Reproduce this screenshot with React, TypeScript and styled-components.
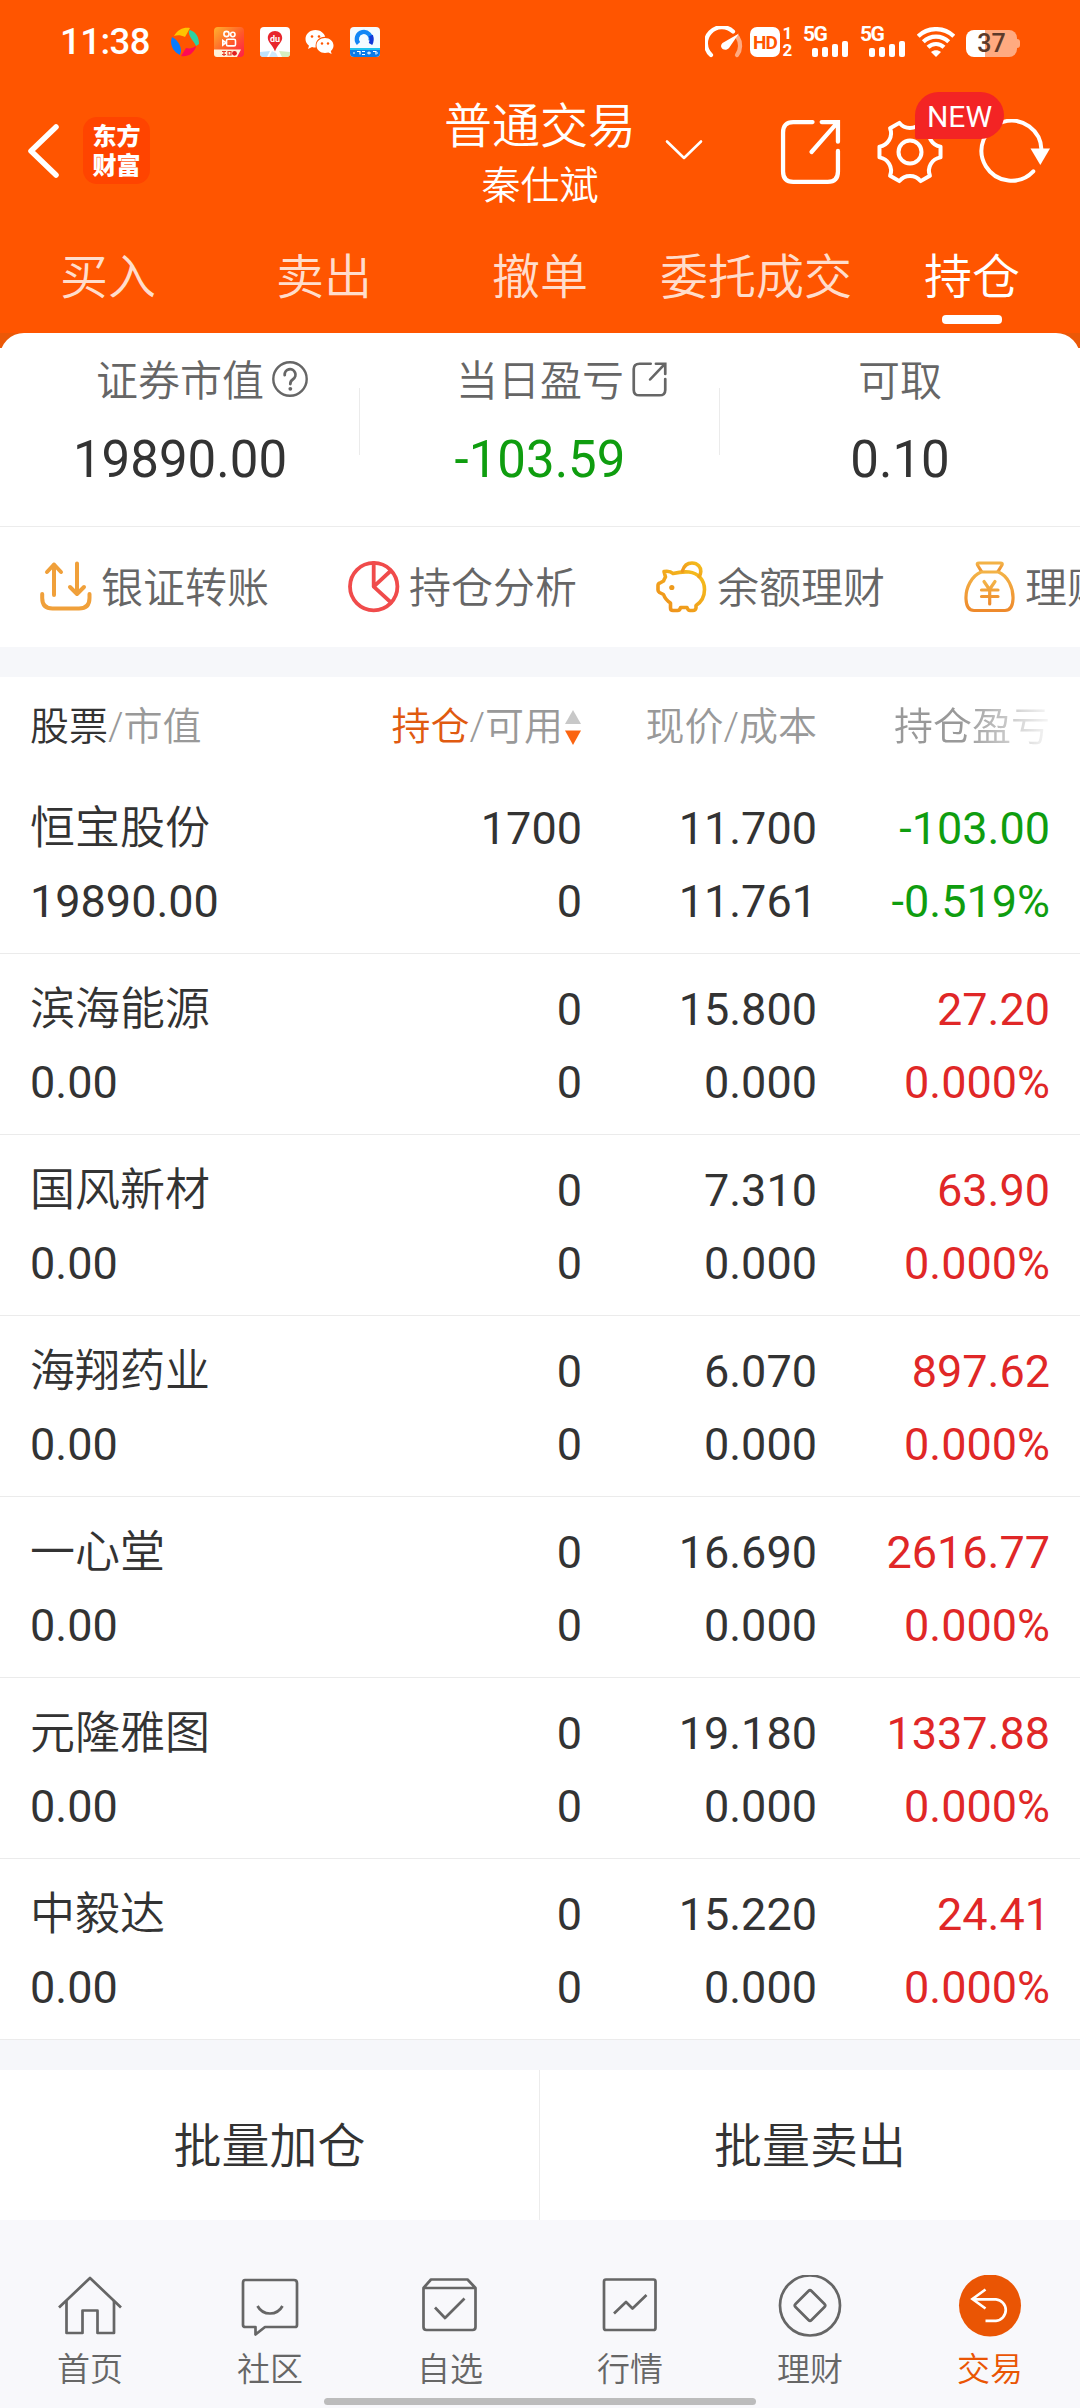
import React from 'react';
import styled, { createGlobalStyle } from 'styled-components';

const GlobalStyle = createGlobalStyle`
  * { box-sizing: border-box; }
  html, body { margin: 0; padding: 0; background: #f7f8fa; }
  body { font-family: Roboto, "Noto Sans CJK SC", sans-serif; color: #333; }
  svg { display: block; flex: none; }
`;

const Screen = styled.div`
  width: 1080px;
  height: 2408px;
  display: flex;
  flex-direction: column;
  overflow: hidden;
  background: #f7f8fa;
`;

/* ---------- status bar ---------- */

const StatusBar = styled.div`
  height: 84px;
  padding: 0 60px 0 61px;
  display: flex;
  align-items: center;
  justify-content: space-between;
  background: #ff5500;
  color: #fff;
`;

const StatusGroup = styled.div<{ $gap: number }>`
  display: flex;
  align-items: center;
  gap: ${(p) => p.$gap}px;
`;

const Clock = styled.span`
  width: 95px;
  margin-left: -1px;
  padding-right: 1px;
  font-size: 36.5px;
  line-height: 44px;
  font-weight: 500;
  letter-spacing: -0.5px;
  white-space: nowrap;
`;

const HdBadge = styled.span`
  width: 30px;
  height: 30px;
  margin-left: 7px;
  border-radius: 7px;
  background: #fff;
  color: #ff5500;
  font-size: 19px;
  font-weight: 700;
  line-height: 31px;
  text-align: center;
  letter-spacing: -1px;
`;

const SimNumbers = styled.span`
  width: 11px;
  display: flex;
  flex-direction: column;
  font-size: 17px;
  font-weight: 700;
  line-height: 17px;
  text-align: center;
  margin-right: 10px;
  margin-left: 2px;
`;

const Signal = styled.span`
  width: 46px;
  height: 30px;
  display: flex;
  flex-direction: column;
  margin-right: 11px;
`;

const SignalLabel = styled.span`
  font-size: 21px;
  font-weight: 700;
  line-height: 15px;
  letter-spacing: -1.5px;
`;

const SignalBars = styled.span`
  height: 16px;
  margin-top: -1px;
  padding-left: 9px;
  display: flex;
  align-items: flex-end;
  gap: 4px;
`;

const SignalBar = styled.i<{ $h: number }>`
  width: 6px;
  height: ${(p) => p.$h}px;
  border-radius: 2px;
  background: #fff;
`;

const Battery = styled.span`
  width: 51px;
  height: 27px;
  margin: 3px 0 0 11px;
  border-radius: 8px;
  background: linear-gradient(90deg, #fff 0 19px, #ffaa80 19px);
  color: #5c3a2a;
  font-size: 25px;
  font-weight: 500;
  line-height: 28px;
  text-align: center;
`;

const BatteryTip = styled.i`
  width: 3px;
  height: 9px;
  margin-top: 3px;
  border-radius: 0 3px 3px 0;
  background: #ffaa80;
`;

/* ---------- title bar ---------- */

const TitleBar = styled.div`
  height: 132px;
  padding-left: 27px;
  display: flex;
  align-items: flex-start;
  background: #ff5500;
  color: #fff;
`;

const TitleLeft = styled.div`
  width: 393px;
  padding-top: 33px;
  display: flex;
  align-items: center;
  gap: 24px;
`;

const BrandLogo = styled.div`
  width: 67px;
  height: 67px;
  padding-top: 2px;
  border-radius: 14px;
  background: #ff4400;
  display: flex;
  flex-direction: column;
  align-items: center;
  justify-content: center;
  font-size: 24px;
  font-weight: 900;
  line-height: 29px;
`;

const TitleBlock = styled.div`
  width: 240px;
  padding-top: 13px;
  display: flex;
  flex-direction: column;
  align-items: center;
`;

const Title = styled.div`
  font-size: 48px;
  line-height: 60px;
  font-weight: 350;
`;

const Account = styled.div`
  font-size: 39px;
  line-height: 59px;
  font-weight: 350;
`;

const TitleChevron = styled.div`
  width: 120px;
  padding: 55px 0 0 5px;
`;

const TitleActions = styled.div`
  display: flex;
  padding-top: 35px;
  gap: 36px;
`;

const ActionWithBadge = styled.div`
  position: relative;
  z-index: 1;
`;

const NewBadge = styled.span`
  position: absolute;
  left: 38px;
  top: -27px;
  width: 89px;
  height: 47px;
  border-radius: 24px 24px 24px 2px;
  background: #f32424;
  font-size: 30px;
  line-height: 49px;
  text-align: center;
`;

/* ---------- trade tabs ---------- */

const TradeTabs = styled.div`
  height: 117px;
  display: grid;
  grid-template-columns: repeat(5, 1fr);
  background: #ff5500;
`;

const TradeTab = styled.div<{ $active?: boolean }>`
  padding-top: 32px;
  display: flex;
  flex-direction: column;
  align-items: center;
  gap: 7px;
  font-size: 48px;
  line-height: 60px;
  font-weight: 350;
  color: ${(p) => (p.$active ? '#fff' : '#ffddcc')};
`;

const TabUnderline = styled.i`
  width: 60px;
  height: 9px;
  border-radius: 4px;
  background: #fff;
`;

/* ---------- account summary ---------- */

const SummaryShell = styled.div`
  height: 194px;
  background: linear-gradient(180deg, #eb5807 0 15px, #fff 15px);
`;

const Summary = styled.div`
  height: 194px;
  border-radius: 24px 24px 0 0;
  border-bottom: 1px solid #ececec;
  background: #fff;
  display: grid;
  grid-template-columns: repeat(3, 1fr);
`;

const SummaryCell = styled.div`
  display: flex;
  flex-direction: column;
  align-items: center;
  padding-top: 19px;
  background: linear-gradient(#ebebeb, #ebebeb) no-repeat right 55px / 1px 67px;
  &:last-child { background: none; }
`;

const SummaryLabel = styled.div`
  display: flex;
  align-items: center;
  font-size: 42px;
  line-height: 60px;
  font-weight: 350;
  color: #666;
`;

const LabelIcon = styled.span`
  width: 36px;
  margin: -6px -44px 0 8px;
`;

const SummaryValue = styled.div<{ $color?: string }>`
  font-size: 51px;
  line-height: 60px;
  margin-top: 18px;
  color: ${(p) => p.$color || '#333'};
`;

/* ---------- shortcuts ---------- */

const Shortcuts = styled.div`
  height: 120px;
  padding: 0 0 0 40px;
  display: flex;
  background: #fff;
  overflow: hidden;
`;

const Shortcut = styled.div`
  flex: 0 0 308px;
  display: flex;
  align-items: center;
  gap: 9px;
`;

const ShortcutLabel = styled.span`
  padding-top: 4px;
  font-size: 42px;
  line-height: 60px;
  font-weight: 350;
  color: #666;
  white-space: nowrap;
`;

const Gap = styled.div`
  height: 30px;
  background: #f6f7fa;
`;

/* ---------- positions table ---------- */

const columns = '320px 232px 235px 233px';

const TableHead = styled.div`
  height: 96px;
  padding: 20px 30px 0;
  display: grid;
  grid-template-columns: ${columns};
  align-items: start;
  background: #fff;
  font-size: 39px;
  line-height: 61px;
  font-weight: 350;
  color: #999;
`;

const HeadCell = styled.div<{ $right?: boolean; $fade?: boolean }>`
  display: flex;
  justify-content: ${(p) => (p.$right ? 'flex-end' : 'flex-start')};
  align-items: center;
  white-space: nowrap;
  ${(p) => p.$fade && 'mask-image: linear-gradient(90deg, #000 145px, rgba(0,0,0,.08) 233px);'}
`;

const HeadStrong = styled.span<{ $color: string }>`
  color: ${(p) => p.$color};
`;

const SortArrows = styled.span`
  width: 16px;
  margin: 0 1px 0 2px;
`;

const Row = styled.div`
  height: 181px;
  padding: 19px 30px 0;
  border-bottom: 1px solid #ebebeb;
  display: grid;
  grid-template-columns: ${columns};
  align-content: start;
  background: #fff;
  font-size: 45px;
  line-height: 73px;
`;

const Cell = styled.div<{ $color?: string }>`
  text-align: right;
  color: ${(p) => p.$color || '#333'};
`;

const LeftCell = styled(Cell)`
  text-align: left;
`;

const NameCell = styled(LeftCell)`
  font-weight: 350;
`;

/* ---------- batch actions ---------- */

const BatchBar = styled.div`
  height: 150px;
  display: grid;
  grid-template-columns: 1fr 1fr;
  background: #fff;
`;

const BatchButton = styled.button`
  border: 0;
  border-right: 1px solid #ececec;
  padding: 4px 0 0;
  background: none;
  font: inherit;
  font-size: 48px;
  font-weight: 350;
  line-height: 60px;
  color: #333;
  &:last-child { border-right: 0; }
`;

/* ---------- bottom navigation ---------- */

const BottomNav = styled.nav`
  height: 188px;
  display: flex;
  flex-direction: column;
  align-items: center;
  background: #f8f8fb;
`;

const NavItems = styled.div`
  width: 100%;
  height: 178px;
  padding-top: 55px;
  display: grid;
  grid-template-columns: repeat(6, 1fr);
`;

const NavItem = styled.div<{ $active?: boolean }>`
  display: flex;
  flex-direction: column;
  align-items: center;
  gap: 11px;
  font-size: 33px;
  line-height: 40px;
  font-weight: 350;
  color: ${(p) => (p.$active ? '#ea5504' : '#666')};
`;

const HomeIndicator = styled.i`
  width: 432px;
  height: 7px;
  border-radius: 4px;
  background: #bcbcbc;
`;

/* ---------- icons ---------- */

const stroke = { fill: 'none', stroke: 'currentColor', strokeLinejoin: 'round', strokeLinecap: 'round' } as const;

const PinwheelIcon = () => (
  <svg width="28" height="30" viewBox="0 0 28 30">
    <path d="M3 9C7 2 13 0 19 1L14 10C10 8 6 8 3 9Z" fill="#ffc400" />
    <path d="M19 3C25 5 28 10 28 17L25 19C22 13 17 9 18 4Z" fill="#2fd2a0" />
    <path d="M25 20C22 27 17 30 10 29L15 21C19 22 22 21 25 19Z" fill="#ff0a54" />
    <path d="M1 10C5 12 10 17 10 24L9 28C3 25 0 20 0 14Z" fill="#0a7bff" />
  </svg>
);

const VideoAppIcon = () => (
  <svg width="30" height="30" viewBox="0 0 30 30">
    <defs>
      <linearGradient id="video" x1="0" y1="0" x2="1" y2="1">
        <stop offset="0" stopColor="#ffb22e" />
        <stop offset=".55" stopColor="#ff5a2a" />
        <stop offset="1" stopColor="#ff1c4a" />
      </linearGradient>
    </defs>
    <rect width="30" height="30" rx="4" fill="url(#video)" />
    <g fill="none" stroke="#fff" strokeWidth="1.600">
      <circle cx="12.500" cy="7" r="2.600" />
      <circle cx="18.800" cy="7.500" r="2.200" />
      <rect x="12.500" y="12.300" width="9" height="6.600" rx="1.500" />
      <path d="M12 15.600 8.800 13.500v4.600Z" />
    </g>
    <path d="M0 22.500H27L23 30H3Q0 30 0 27Z" fill="#fff0d8" />
    <path d="M8 24.500h4M8 27.500h4M10 24v5M14 24.500h3v3.500h-3Z" stroke="#e8402a" strokeWidth="1.200" fill="none" />
    <circle cx="20.500" cy="26.300" r="2.400" fill="#e01f1f" />
  </svg>
);

const MapAppIcon = () => (
  <svg width="30" height="30" viewBox="0 0 30 30">
    <rect width="30" height="30" rx="4" fill="#fff" />
    <path d="M0 25 10 24 7 30H3Q0 30 0 27Z" fill="#bfe3fb" />
    <path d="M12 24 16 26 18 30H9Z" fill="#cfe9fb" />
    <path d="M19 24 30 25V27Q30 30 27 30H22Z" fill="#d6efc0" />
    <path d="M15 4c4.200 0 7.200 3 7.200 7 0 4.500-5 7-7.200 13.500C12.800 18 7.800 15.500 7.800 11c0-4 3-7 7.200-7Z" fill="#e8262d" />
    <text x="15" y="14.500" fontSize="9" fontWeight="700" fill="#fff" textAnchor="middle">du</text>
  </svg>
);

const ChatAppIcon = () => (
  <svg width="29" height="30" viewBox="0 0 29 30">
    <path d="M10.500 3C4.700 3 .5 7 .5 12c0 2.800 1.300 5 3.500 6.700L3 22l4-2c1.200.4 2.400.5 3.700.5C10 14 14 9.700 20.200 9.800 19 5.800 15.200 3 10.500 3Z" fill="#fff" />
    <path d="M20 11c4.800 0 8.500 3.300 8.500 7.500 0 2.300-1 4.200-2.700 5.500l.8 3-3.200-1.500c-1 .3-2.200.5-3.400.5-4.800 0-8.500-3.300-8.500-7.500S15.200 11 20 11Z" fill="#fff" />
    <g fill="#ff5500">
      <circle cx="7" cy="9.500" r="1.300" /><circle cx="14" cy="9.500" r="1.300" />
      <circle cx="17" cy="16.500" r="1.200" /><circle cx="23" cy="16.500" r="1.200" />
    </g>
  </svg>
);

const BrowserAppIcon = () => (
  <svg width="30" height="30" viewBox="0 0 30 30">
    <rect width="30" height="30" rx="4" fill="#f4fbff" />
    <path d="M0 21H30V26Q30 30 26 30H4Q0 30 0 26Z" fill="#0c7bea" />
    <path d="M0 21H30V23H0Z" fill="#1fc3ee" />
    <path d="M8.500 16.500A7 7 0 1 1 20.500 14" fill="none" stroke="#1286f5" strokeWidth="4.300" />
    <path d="M21 8.500C22.200 12 21.700 15 20.500 17" fill="none" stroke="#1238d8" strokeWidth="4" />
    <path d="M3 26h2M7 24.500h3v3M12 24.500h3M12 27.500h3M17 26h4M19 24.500v3M23 24.500h3v3M28 26h-1" stroke="#fff" strokeWidth="1.200" fill="none" />
  </svg>
);

const GaugeIcon = () => (
  <svg width="38" height="32" viewBox="0 0 38 32">
    <path d="M6 29A15.700 15.700 0 0 1 28 5.500" fill="none" stroke="#fff" strokeWidth="4.200" strokeLinecap="round" />
    <path d="M32.500 11A15.700 15.700 0 0 1 32 29" fill="none" stroke="#ffaa80" strokeWidth="4.200" strokeLinecap="round" />
    <path d="M34 7.500 24 22C20 26.500 13 21.500 17.500 17Z" fill="#fff" />
  </svg>
);

const WifiIcon = () => (
  <svg width="38" height="30" viewBox="0 0 38 30">
    <g fill="none" stroke="#fff" strokeWidth="4.200">
      <path d="M1.200 9.200C11 -.3 27 -.3 36.800 9.200" />
      <path d="M6.300 14.800C13.500 8 24.500 8 31.700 14.800" />
      <path d="M11 20.200C15.500 15.900 22.500 15.900 27 20.200" />
    </g>
    <path d="M14 25C17 22.500 21 22.500 24 25L19 30Z" fill="#fff" />
  </svg>
);

const BackIcon = () => (
  <svg width="32" height="56" viewBox="0 0 32 56">
    <path d="M29 4 4 28 29 52" {...stroke} strokeWidth="5.500" />
  </svg>
);

const ChevronDown = () => (
  <svg width="38" height="22" viewBox="0 0 38 22">
    <path d="M2 2.500 19 19 36 2.500" {...stroke} strokeWidth="2.600" />
  </svg>
);

const ExportIcon = ({ w, h, weight = 4.2 }: { w: number; h: number; weight?: number }) => (
  <svg width={w} height={h} viewBox="0 0 60 64" preserveAspectRatio="none">
    <path d="M32 3H13Q3 3 3 13V51Q3 61 13 61H47Q57 61 57 51V31" {...stroke} strokeWidth={weight} />
    <path d="M31 32 56 4M41 3H57V22" {...stroke} strokeLinejoin="miter" strokeWidth={weight} />
  </svg>
);

const gearOutline = () => {
  const point = (deg: number) => {
    const a = (deg * Math.PI) / 180;
    return `${(33 + 31 * Math.cos(a)).toFixed(2)} ${(33 + 31 * Math.sin(a)).toFixed(2)}`;
  };
  let d = `M${point(-10)}`;
  for (let tooth = 0; tooth < 6; tooth += 1) {
    const a = tooth * 60;
    d += `L${point(a + 10)}A13.500 13.500 0 0 0 ${point(a + 50)}`;
  }
  return `${d}Z`;
};

const GearIcon = () => (
  <svg width="66" height="66" viewBox="0 0 66 66">
    <path d={gearOutline()} {...stroke} strokeWidth="4" />
    <circle cx="33" cy="33" r="11.500" {...stroke} strokeWidth="4" />
  </svg>
);

const RefreshIcon = () => (
  <svg width="72" height="66" viewBox="0 0 72 66">
    <path d="M54.300 52.300A30 30 0 1 1 62.500 31" {...stroke} strokeWidth="4" />
    <path d="M51.500 29.500H71L61.300 46Z" fill="currentColor" />
  </svg>
);

const HelpIcon = () => (
  <svg width="36" height="36" viewBox="0 0 36 36">
    <circle cx="18" cy="18" r="16.700" {...stroke} strokeWidth="2.400" />
    <path d="M12.700 14.200A5.400 5.400 0 1 1 21 18.200C19 19.500 18.300 20.300 18.300 23" {...stroke} strokeWidth="2.800" />
    <circle cx="18.300" cy="27.800" r="1.900" fill="currentColor" />
  </svg>
);

const TransferIcon = () => (
  <svg width="52" height="52" viewBox="0 0 52 52">
    <g {...stroke} stroke="#f0a03a" strokeWidth="4">
      <path d="M14 34V3.500M7 11 14 3.500 21 11" />
      <path d="M37 2.500V32.500M30 26 37 33 44 26" />
      <path d="M2.200 33V37Q2.200 47.500 12.500 47.500H39Q49.500 47.500 49.500 37V33" />
    </g>
  </svg>
);

const PieIcon = () => (
  <svg width="52" height="52" viewBox="0 0 52 52">
    <g {...stroke} stroke="#f04b4b" strokeWidth="3.800">
      <circle cx="25.700" cy="25.600" r="23.700" />
      <path d="M25.700 2V25.600L43 41.500M25.700 25.600 42.500 10" />
    </g>
  </svg>
);

const PiggyIcon = () => (
  <svg width="52" height="52" viewBox="0 0 52 52">
    <defs>
      <linearGradient id="piggy" x1="1" y1="0" x2="0" y2="1">
        <stop offset="0" stopColor="#f5c01c" />
        <stop offset="1" stopColor="#ee8d1c" />
      </linearGradient>
    </defs>
    <g fill="none" stroke="url(#piggy)" strokeWidth="3.600" strokeLinejoin="round" strokeLinecap="round">
      <path d="M8 10.500Q14 9.500 17 12.500Q25 10.500 33 11C42 12 48.500 19 48.500 28.500Q48.500 39 40 44.500V47Q39.500 49.500 37 49.500H34Q32 49.500 31 46.500H24.500Q24 49.500 21.500 49.500H17Q14.500 49.500 14.500 47V42Q9.500 39 7.500 33.500L3.500 31.500Q2 30.500 2 29V24.500Q2 22.500 4 22L7.500 20Q8.500 17.500 9.500 16Z" />
      <path d="M26.500 10C28 4.500 31.500 2 36 2C42 2 45 6.500 44.800 10.500Q44.800 13 43 15.500" />
    </g>
    <circle cx="15.800" cy="26.500" r="2.600" fill="#ee9a1c" />
  </svg>
);

const MoneyBagIcon = () => (
  <svg width="52" height="52" viewBox="0 0 52 52">
    <defs>
      <linearGradient id="bag" x1="0" y1="0" x2="0" y2="1">
        <stop offset="0" stopColor="#f3b347" />
        <stop offset="1" stopColor="#ee8a2c" />
      </linearGradient>
    </defs>
    <g fill="none" stroke="url(#bag)" strokeWidth="3.200" strokeLinejoin="round" strokeLinecap="round">
      <path d="M17.500 10.500 13.500 4Q12.500 2 15 2H36.500Q39 2 38 4L34 10.500" />
      <path d="M17 11H34.500C44 15 49.500 27 49 38Q48.500 49.500 41 49.500H10Q2.500 49.500 2 38C1.500 27 7.500 15 17 11Z" />
      <path d="M20 20.500 25.500 28.500 31 20.500M17.500 29H34M17.500 35.500H34M25.700 29V43" />
    </g>
  </svg>
);

const SortIcon = () => (
  <svg width="16" height="35" viewBox="0 0 16 35">
    <path d="M8 0 16 14H0Z" fill="#c8c8c8" />
    <path d="M8 35 16 20.500H0Z" fill="#fb6410" />
  </svg>
);

const NavGlyph = ({ children }: { children: React.ReactNode }) => (
  <svg width="64" height="64" viewBox="0 0 64 64">
    <g fill="none" stroke="currentColor" strokeWidth="2.700" strokeLinejoin="round">{children}</g>
  </svg>
);

const navItems = [
  { label: '首页', glyph: <><path d="M1 32.500 32 3 63 32.500" /><path d="M8.500 26V58H24.500V35.500H39.500V58H56V26" /></> },
  { label: '社区', glyph: <><path d="M7 5H56Q59 5 59 8V50Q59 52 57 52H27L17.500 59.500V52H7.500Q5 52 5 50V8Q5 5 7 5Z" /><path d="M19.500 31C25 41 39 41 44.500 31" /></> },
  { label: '自选', glyph: <><path d="M5.500 13 13 4.500H49.500L57.500 13V52Q57.500 55 54.500 55H8.500Q5.500 55 5.500 52ZM5.500 13H57.500" /><path d="M17 32.500 27 43 46.500 23.500" /></> },
  { label: '行情', glyph: <><rect x="6" y="4.500" width="51.500" height="50.500" rx="2" /><path d="M16 38.500 28 27 34.500 33.500 48.500 20" /></> },
  { label: '理财', glyph: <><circle cx="32" cy="30.500" r="30" /><path d="M30.500 16Q32 14.500 33.500 16L46.500 29Q48 30.500 46.500 32L33.500 45Q32 46.500 30.500 45L17.500 32Q16 30.500 17.500 29Z" /></> },
  { label: '交易', active: true, glyph: <><circle cx="32" cy="30.500" r="31" fill="#ea5504" stroke="none" /><g stroke="#fff"><path d="M27.500 14.500 14.500 24 27.500 33.500" strokeLinejoin="miter" /><path d="M15 24.300H38A10.800 10.800 0 0 1 38 45.800H27.500" /></g></> },
];

/* ---------- data ---------- */

const GREEN = '#0f9d0f';
const RED = '#e02727';

const positions = [
  { name: '恒宝股份', value: '19890.00', held: '1700', avail: '0', price: '11.700', cost: '11.761', profit: '-103.00', rate: '-0.519%' },
  { name: '滨海能源', value: '0.00', held: '0', avail: '0', price: '15.800', cost: '0.000', profit: '27.20', rate: '0.000%' },
  { name: '国风新材', value: '0.00', held: '0', avail: '0', price: '7.310', cost: '0.000', profit: '63.90', rate: '0.000%' },
  { name: '海翔药业', value: '0.00', held: '0', avail: '0', price: '6.070', cost: '0.000', profit: '897.62', rate: '0.000%' },
  { name: '一心堂', value: '0.00', held: '0', avail: '0', price: '16.690', cost: '0.000', profit: '2616.77', rate: '0.000%' },
  { name: '元隆雅图', value: '0.00', held: '0', avail: '0', price: '19.180', cost: '0.000', profit: '1337.88', rate: '0.000%' },
  { name: '中毅达', value: '0.00', held: '0', avail: '0', price: '15.220', cost: '0.000', profit: '24.41', rate: '0.000%' },
];

const shortcuts = [
  { label: '银证转账', icon: <TransferIcon /> },
  { label: '持仓分析', icon: <PieIcon /> },
  { label: '余额理财', icon: <PiggyIcon /> },
  { label: '理财', icon: <MoneyBagIcon /> },
];

const CellularSignal = () => (
  <Signal>
    <SignalLabel>5G</SignalLabel>
    <SignalBars>
      {[9, 10, 13, 16].map((h) => <SignalBar key={h} $h={h} />)}
    </SignalBars>
  </Signal>
);

export default function App() {
  return (
    <Screen>
      <GlobalStyle />
      <StatusBar>
        <StatusGroup $gap={15.5}>
          <Clock>11:38</Clock>
          <PinwheelIcon />
          <VideoAppIcon />
          <MapAppIcon />
          <ChatAppIcon />
          <BrowserAppIcon />
        </StatusGroup>
        <StatusGroup $gap={0}>
          <GaugeIcon />
          <HdBadge>HD</HdBadge>
          <SimNumbers><span>1</span><span>2</span></SimNumbers>
          <CellularSignal />
          <CellularSignal />
          <WifiIcon />
          <Battery>37</Battery>
          <BatteryTip />
        </StatusGroup>
      </StatusBar>

      <TitleBar>
        <TitleLeft>
          <BackIcon />
          <BrandLogo><span>东方</span><span>财富</span></BrandLogo>
        </TitleLeft>
        <TitleBlock>
          <Title>普通交易</Title>
          <Account>秦仕斌</Account>
        </TitleBlock>
        <TitleChevron><ChevronDown /></TitleChevron>
        <TitleActions>
          <ExportIcon w={61} h={66} />
          <ActionWithBadge>
            <GearIcon />
            <NewBadge>NEW</NewBadge>
          </ActionWithBadge>
          <RefreshIcon />
        </TitleActions>
      </TitleBar>

      <TradeTabs>
        {['买入', '卖出', '撤单', '委托成交'].map((t) => <TradeTab key={t}>{t}</TradeTab>)}
        <TradeTab $active>持仓<TabUnderline /></TradeTab>
      </TradeTabs>

      <SummaryShell>
        <Summary>
          <SummaryCell>
            <SummaryLabel>证券市值<LabelIcon><HelpIcon /></LabelIcon></SummaryLabel>
            <SummaryValue>19890.00</SummaryValue>
          </SummaryCell>
          <SummaryCell>
            <SummaryLabel>当日盈亏<LabelIcon><ExportIcon w={35} h={35} weight={4.6} /></LabelIcon></SummaryLabel>
            <SummaryValue $color={GREEN}>-103.59</SummaryValue>
          </SummaryCell>
          <SummaryCell>
            <SummaryLabel>可取</SummaryLabel>
            <SummaryValue>0.10</SummaryValue>
          </SummaryCell>
        </Summary>
      </SummaryShell>

      <Shortcuts>
        {shortcuts.map((s) => (
          <Shortcut key={s.label}>{s.icon}<ShortcutLabel>{s.label}</ShortcutLabel></Shortcut>
        ))}
      </Shortcuts>

      <Gap />

      <TableHead>
        <HeadCell><HeadStrong $color="#333">股票</HeadStrong>/市值</HeadCell>
        <HeadCell $right><HeadStrong $color="#e05a10">持仓</HeadStrong>/可用<SortArrows><SortIcon /></SortArrows></HeadCell>
        <HeadCell $right>现价/成本</HeadCell>
        <HeadCell $right $fade>持仓盈亏</HeadCell>
      </TableHead>

      {positions.map((p) => {
        const color = p.profit.startsWith('-') ? GREEN : RED;
        return (
          <Row key={p.name}>
            <NameCell>{p.name}</NameCell>
            <Cell>{p.held}</Cell>
            <Cell>{p.price}</Cell>
            <Cell $color={color}>{p.profit}</Cell>
            <LeftCell>{p.value}</LeftCell>
            <Cell>{p.avail}</Cell>
            <Cell>{p.cost}</Cell>
            <Cell $color={color}>{p.rate}</Cell>
          </Row>
        );
      })}

      <Gap />

      <BatchBar>
        <BatchButton>批量加仓</BatchButton>
        <BatchButton>批量卖出</BatchButton>
      </BatchBar>

      <BottomNav>
        <NavItems>
          {navItems.map((n) => (
            <NavItem key={n.label} $active={n.active}>
              <NavGlyph>{n.glyph}</NavGlyph>
              {n.label}
            </NavItem>
          ))}
        </NavItems>
        <HomeIndicator />
      </BottomNav>
    </Screen>
  );
}
